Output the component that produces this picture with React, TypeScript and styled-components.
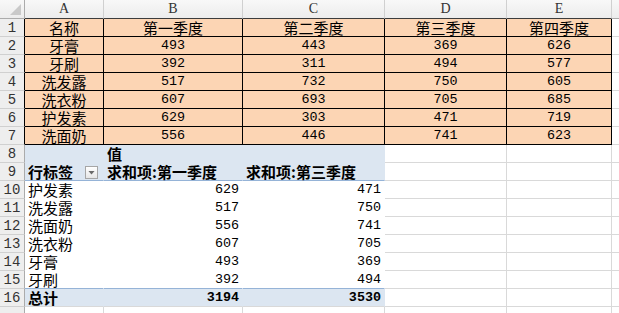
import styled, { createGlobalStyle, css } from 'styled-components';

const GlobalStyle = createGlobalStyle`
  html, body {
    margin: 0;
    padding: 0;
    background: #ffffff;
    overflow: hidden;
  }
  body {
    font-family: 'Noto Sans CJK SC', 'Liberation Sans', sans-serif;
  }
`;

const cols = ['A', 'B', 'C', 'D', 'E', ''];
const colWidths = [25, 79, 139, 142, 122, 105, 20];

const sourceRows: [string, number, number, number, number][] = [
  ['牙膏', 493, 443, 369, 626],
  ['牙刷', 392, 311, 494, 577],
  ['洗发露', 517, 732, 750, 605],
  ['洗衣粉', 607, 693, 705, 685],
  ['护发素', 629, 303, 471, 719],
  ['洗面奶', 556, 446, 741, 623],
];

const pivotRows: [string, number, number][] = [
  ['护发素', 629, 471],
  ['洗发露', 517, 750],
  ['洗面奶', 556, 741],
  ['洗衣粉', 607, 705],
  ['牙膏', 493, 369],
  ['牙刷', 392, 494],
];

const PEACH = '#fcd5b4';
const PIVOT = '#dce6f1';
const PIVOT_LINE = '#95b3d7';
const GRID = '#d9d9d9';

const Sheet = styled.div`
  display: grid;
  grid-template-columns: ${colWidths.map((w) => `${w}px`).join(' ')};
  grid-auto-rows: 18px;
  grid-template-rows: 19px;
  width: 632px;
`;

const Corner = styled.div`
  display: flex;
  align-items: flex-end;
  justify-content: flex-end;
  padding: 0 3px 3px 0;
  box-sizing: border-box;
  background: linear-gradient(#f8f8f8, #ececec);
  border-right: 1px solid #ababab;
  border-bottom: 1px solid #ababab;

  &::after {
    content: '';
    width: 11px;
    height: 11px;
    background: #c9c9c9;
    clip-path: polygon(100% 0, 100% 100%, 0 100%);
  }
`;

const ColHead = styled.div<{ $dark: boolean }>`
  display: flex;
  align-items: center;
  justify-content: center;
  box-sizing: border-box;
  background: linear-gradient(#f8f8f8, #ececec);
  border-right: 1px solid #d0d0d0;
  border-bottom: 1px solid ${(p) => (p.$dark ? '#3c3c3c' : '#ababab')};
  font-family: 'Liberation Serif', serif;
  font-size: 14px;
  color: #333333;
`;

const RowHead = styled.div<{ $dark: boolean }>`
  display: flex;
  align-items: center;
  justify-content: center;
  box-sizing: border-box;
  background: #eeeeee;
  border-right: 1px solid ${(p) => (p.$dark ? '#000000' : '#ababab')};
  border-bottom: 1px solid #d0d0d0;
  font-family: 'Liberation Mono', monospace;
  font-size: 14px;
  color: #333333;
  padding-top: 1px;
`;

type CellProps = {
  $bg?: string;
  $right?: string;
  $bottom?: string;
  $align?: 'left' | 'center' | 'right';
  $bold?: boolean;
  $num?: boolean;
};

const Cell = styled.div<CellProps>`
  display: flex;
  align-items: flex-end;
  box-sizing: border-box;
  overflow: visible;
  white-space: nowrap;
  padding: 0 3px 0 3px;
  line-height: 17px;
  background: ${(p) => p.$bg ?? '#ffffff'};
  border-right: 1px solid ${(p) => p.$right ?? GRID};
  border-bottom: 1px solid ${(p) => p.$bottom ?? GRID};
  justify-content: ${(p) =>
    p.$align === 'center' ? 'center' : p.$align === 'right' ? 'flex-end' : 'flex-start'};
  font-size: 15px;
  font-weight: ${(p) => (p.$bold ? 700 : 400)};
  color: #000000;
  ${(p) =>
    p.$num &&
    css`
      font-family: 'Liberation Mono', monospace;
      font-size: 13.4px;
      line-height: 16px;
    `}
`;

const LabelWithFilter = styled(Cell)`
  justify-content: space-between;
  align-items: center;
  padding-right: 5px;
`;

const FilterButton = styled.span`
  display: flex;
  align-items: center;
  justify-content: center;
  width: 13px;
  height: 13px;
  box-sizing: border-box;
  border: 1px solid #a6a6a6;
  background: linear-gradient(#ffffff, #e6e6e6);
  margin-top: 2px;

  &::after {
    content: '';
    width: 7px;
    height: 4px;
    background: #6a6a6a;
    clip-path: polygon(0 0, 100% 0, 50% 100%);
  }
`;

export default function App() {
  const rowCount = 17;
  return (
    <>
      <GlobalStyle />
      <Sheet>
        <Corner />
        {cols.map((c, i) => (
          <ColHead key={`h${i}`} $dark={i < 5}>
            {c}
          </ColHead>
        ))}

        {Array.from({ length: rowCount }, (_, r) => {
          const rowNo = r + 1;
          const cells: JSX.Element[] = [
            <RowHead key={`r${rowNo}`} $dark={rowNo <= 7}>
              {rowNo <= 16 ? rowNo : ''}
            </RowHead>,
          ];

          if (rowNo === 1) {
            ['名称', '第一季度', '第二季度', '第三季度', '第四季度'].forEach((t, i) =>
              cells.push(
                <Cell key={`c${rowNo}-${i}`} $bg={PEACH} $right="#000" $bottom="#000" $align="center">
                  {t}
                </Cell>,
              ),
            );
          } else if (rowNo <= 7) {
            const row = sourceRows[rowNo - 2];
            row.forEach((v, i) =>
              cells.push(
                <Cell
                  key={`c${rowNo}-${i}`}
                  $bg={PEACH}
                  $right="#000"
                  $bottom="#000"
                  $align="center"
                  $num={typeof v === 'number'}
                >
                  {v}
                </Cell>,
              ),
            );
          } else if (rowNo === 8) {
            cells.push(<Cell key="c8a" $bg={PIVOT} $right={PIVOT} $bottom={PIVOT} />);
            cells.push(
              <Cell key="c8b" $bg={PIVOT} $right={PIVOT} $bottom={PIVOT} $bold>
                值
              </Cell>,
            );
            cells.push(<Cell key="c8c" $bg={PIVOT} $right={PIVOT} $bottom={PIVOT} />);
            cells.push(<Cell key="c8d" />, <Cell key="c8e" />);
          } else if (rowNo === 9) {
            cells.push(
              <LabelWithFilter key="c9a" $bg={PIVOT} $right={PIVOT} $bottom={PIVOT_LINE} $bold>
                <span>行标签</span>
                <FilterButton />
              </LabelWithFilter>,
            );
            cells.push(
              <Cell key="c9b" $bg={PIVOT} $right={PIVOT} $bottom={PIVOT_LINE} $bold>
                求和项:第一季度
              </Cell>,
            );
            cells.push(
              <Cell key="c9c" $bg={PIVOT} $right={PIVOT} $bottom={PIVOT_LINE} $bold>
                求和项:第三季度
              </Cell>,
            );
            cells.push(<Cell key="c9d" />, <Cell key="c9e" />);
          } else if (rowNo <= 15) {
            const [name, q1, q3] = pivotRows[rowNo - 10];
            const bottom = rowNo === 15 ? PIVOT_LINE : '#ffffff';
            cells.push(
              <Cell key={`c${rowNo}a`} $right="#ffffff" $bottom={bottom}>
                {name}
              </Cell>,
              <Cell key={`c${rowNo}b`} $right="#ffffff" $bottom={bottom} $align="right" $num>
                {q1}
              </Cell>,
              <Cell key={`c${rowNo}c`} $right="#ffffff" $bottom={bottom} $align="right" $num>
                {q3}
              </Cell>,
              <Cell key={`c${rowNo}d`} />,
              <Cell key={`c${rowNo}e`} />,
            );
          } else if (rowNo === 16) {
            cells.push(
              <Cell key="c16a" $bg={PIVOT} $right={PIVOT} $bold>
                总计
              </Cell>,
              <Cell key="c16b" $bg={PIVOT} $right={PIVOT} $align="right" $num $bold>
                3194
              </Cell>,
              <Cell key="c16c" $bg={PIVOT} $right={PIVOT} $align="right" $num $bold>
                3530
              </Cell>,
              <Cell key="c16d" />,
              <Cell key="c16e" />,
            );
          } else {
            for (let i = 0; i < 5; i++) cells.push(<Cell key={`c${rowNo}-${i}`} />);
          }

          cells.push(<Cell key={`c${rowNo}f`} />);
          return cells;
        })}
      </Sheet>
    </>
  );
}
